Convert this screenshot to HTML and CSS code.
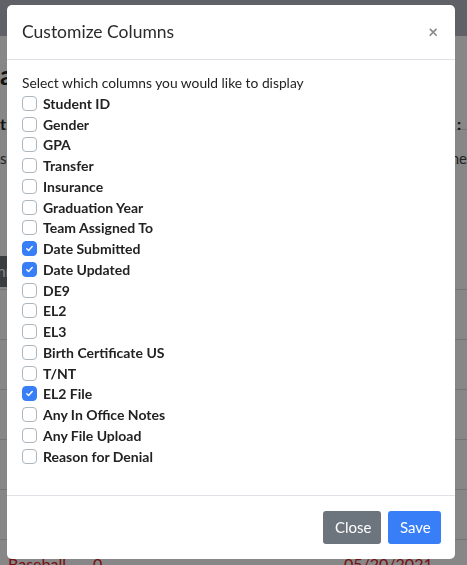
FILE: index.html
```html
<!DOCTYPE html>
<html lang="en">
<head>
<meta charset="utf-8">
<title>Customize Columns</title>
<link rel="stylesheet" href="styles.css">
</head>
<body>
<div class="page">
  <nav class="navbar"></nav>
  <main class="content">
    <h3 class="page-title">al</h3>
    <div class="filter-row"><span>t:</span><span>:</span></div>
    <div class="thead"><span>se</span><span>ne</span></div>
    <div class="spacer"></div>
    <div class="toolbar"><span class="dark-btn">nn</span></div>
    <div class="trow"></div>
    <div class="trow"></div>
    <div class="trow"></div>
    <div class="trow"></div>
    <div class="trow"></div>
    <div class="trow red"><span class="c1">Baseball</span><span class="c2">0</span><span class="c3">05/20/2021</span></div>
  </main>
</div>
<div class="backdrop"></div>
<div class="modal">
  <div class="modal-dialog">
    <div class="modal-header">
      <h5 class="modal-title">Customize Columns</h5>
      <span class="close">&times;</span>
    </div>
    <div class="modal-body">
      <p class="intro">Select which columns you would like to display</p>
      <ul class="checks">
        <li><span class="box"></span>Student ID</li>
        <li><span class="box"></span>Gender</li>
        <li><span class="box"></span>GPA</li>
        <li><span class="box"></span>Transfer</li>
        <li><span class="box"></span>Insurance</li>
        <li><span class="box"></span>Graduation Year</li>
        <li><span class="box"></span>Team Assigned To</li>
        <li><span class="box on"><svg viewBox="0 0 8 8"><path d="M1.6 4.3 L3.2 5.8 L6.4 2.3" fill="none" stroke="#fff" stroke-width="1.3" stroke-linecap="round" stroke-linejoin="round"/></svg></span>Date Submitted</li>
        <li><span class="box on"><svg viewBox="0 0 8 8"><path d="M1.6 4.3 L3.2 5.8 L6.4 2.3" fill="none" stroke="#fff" stroke-width="1.3" stroke-linecap="round" stroke-linejoin="round"/></svg></span>Date Updated</li>
        <li><span class="box"></span>DE9</li>
        <li><span class="box"></span>EL2</li>
        <li><span class="box"></span>EL3</li>
        <li><span class="box"></span>Birth Certificate US</li>
        <li><span class="box"></span>T/NT</li>
        <li><span class="box on"><svg viewBox="0 0 8 8"><path d="M1.6 4.3 L3.2 5.8 L6.4 2.3" fill="none" stroke="#fff" stroke-width="1.3" stroke-linecap="round" stroke-linejoin="round"/></svg></span>EL2 File</li>
        <li><span class="box"></span>Any In Office Notes</li>
        <li><span class="box"></span>Any File Upload</li>
        <li><span class="box"></span>Reason for Denial</li>
      </ul>
    </div>
    <div class="modal-footer">
      <button class="btn btn-secondary">Close</button>
      <button class="btn btn-primary">Save</button>
    </div>
  </div>
</div>
</body>
</html>
```

FILE: styles.css
```css
* { box-sizing: border-box; }
html, body { margin: 0; padding: 0; }
body {
  width: 467px;
  height: 565px;
  overflow: hidden;
  font-family: Lato, "Open Sans", sans-serif;
  color: #212529;
  background: #fff;
}
.page { width: 467px; }
.navbar { height: 36px; background: #b4b8c1; }
.content { padding: 0; }
.page-title {
  margin: 24px 0 0;
  font-size: 26px;
  line-height: 30px;
  font-weight: 700;
  color: #222;
}
.filter-row {
  display: flex;
  justify-content: space-between;
  padding: 24px 6px 0 0;
  height: 40px;
  font-size: 16px;
  line-height: 19px;
  font-weight: 700;
  color: #222;
  border-bottom: 1px solid #ddd;
}
.thead {
  display: flex;
  justify-content: space-between;
  height: 34px;
  padding: 19px 0 0;
  font-size: 15px;
  line-height: 19px;
  color: #444;
  border-bottom: 1px solid #ddd;
}
.spacer { height: 92px; }
.toolbar { height: 33px; display: flex; }
.dark-btn {
  display: block;
  width: 14px;
  height: 31px;
  background: #6c737a;
  color: #fff;
  font-size: 15px;
  line-height: 31px;
  overflow: hidden;
  direction: rtl;
}
.trow {
  height: 50px;
  border-top: 1px solid #dedede;
  display: flex;
  font-size: 16px;
}
.trow.red { color: #e3201f; padding-top: 14px; }
.c1 { width: 93px; padding-left: 8px; }
.c2 { width: 251px; }
.backdrop {
  position: fixed;
  inset: 0;
  background: rgba(0, 0, 0, 0.47);
}
.modal {
  position: fixed;
  inset: 0;
  padding: 5px 0 0 7px;
}
.modal-dialog {
  width: 448px;
  height: 554px;
  background: #fff;
  border-radius: 5px;
  display: flex;
  flex-direction: column;
  overflow: hidden;
}
.modal-header {
  display: flex;
  justify-content: space-between;
  align-items: center;
  height: 55px;
  padding: 0 15px 0 15px;
  border-bottom: 1px solid #dee2e6;
}
.modal-title {
  margin: 0;
  font-size: 17.5px;
  font-weight: 400;
  color: #2b2b2b;
  line-height: 24px;
  padding-bottom: 1px;
}
.close {
  font-size: 17px;
  font-weight: 700;
  color: #8a8a8a;
  line-height: 1;
  margin: -2px 2px 0 0;
}
.modal-body {
  flex: 1;
  padding: 13px 15px 0;
  border-bottom: 1px solid #dee2e6;
}
.intro {
  margin: 0;
  font-size: 13.8px;
  line-height: 20px;
  color: #222;
}
.checks {
  list-style: none;
  margin: 0;
  padding: 0;
}
.checks li {
  display: flex;
  align-items: center;
  height: 20.76px;
  font-size: 14px;
  font-weight: 700;
  color: #222;
}
.box {
  width: 15px;
  height: 15px;
  border: 1px solid #adb5bd;
  border-radius: 4px;
  background: #fff;
  margin: 0 6px 0 0;
  display: flex;
  align-items: center;
  justify-content: center;
  flex: none;
}
.box.on { background: #377ef7; border-color: #377ef7; }
.box svg { width: 9px; height: 9px; }
.modal-footer {
  height: 63px;
  display: flex;
  justify-content: flex-end;
  align-items: center;
  gap: 7px;
  padding: 0 14px 0 0;
}
.btn {
  font-family: inherit;
  font-size: 15px;
  height: 33px;
  border: none;
  border-radius: 3px;
  color: #fff;
  padding: 0 12px;
  line-height: 33px;
}
.btn-secondary { background: #6c757d; width: 58px; }
.btn-primary { background: #377ef7; width: 53px; }
```
